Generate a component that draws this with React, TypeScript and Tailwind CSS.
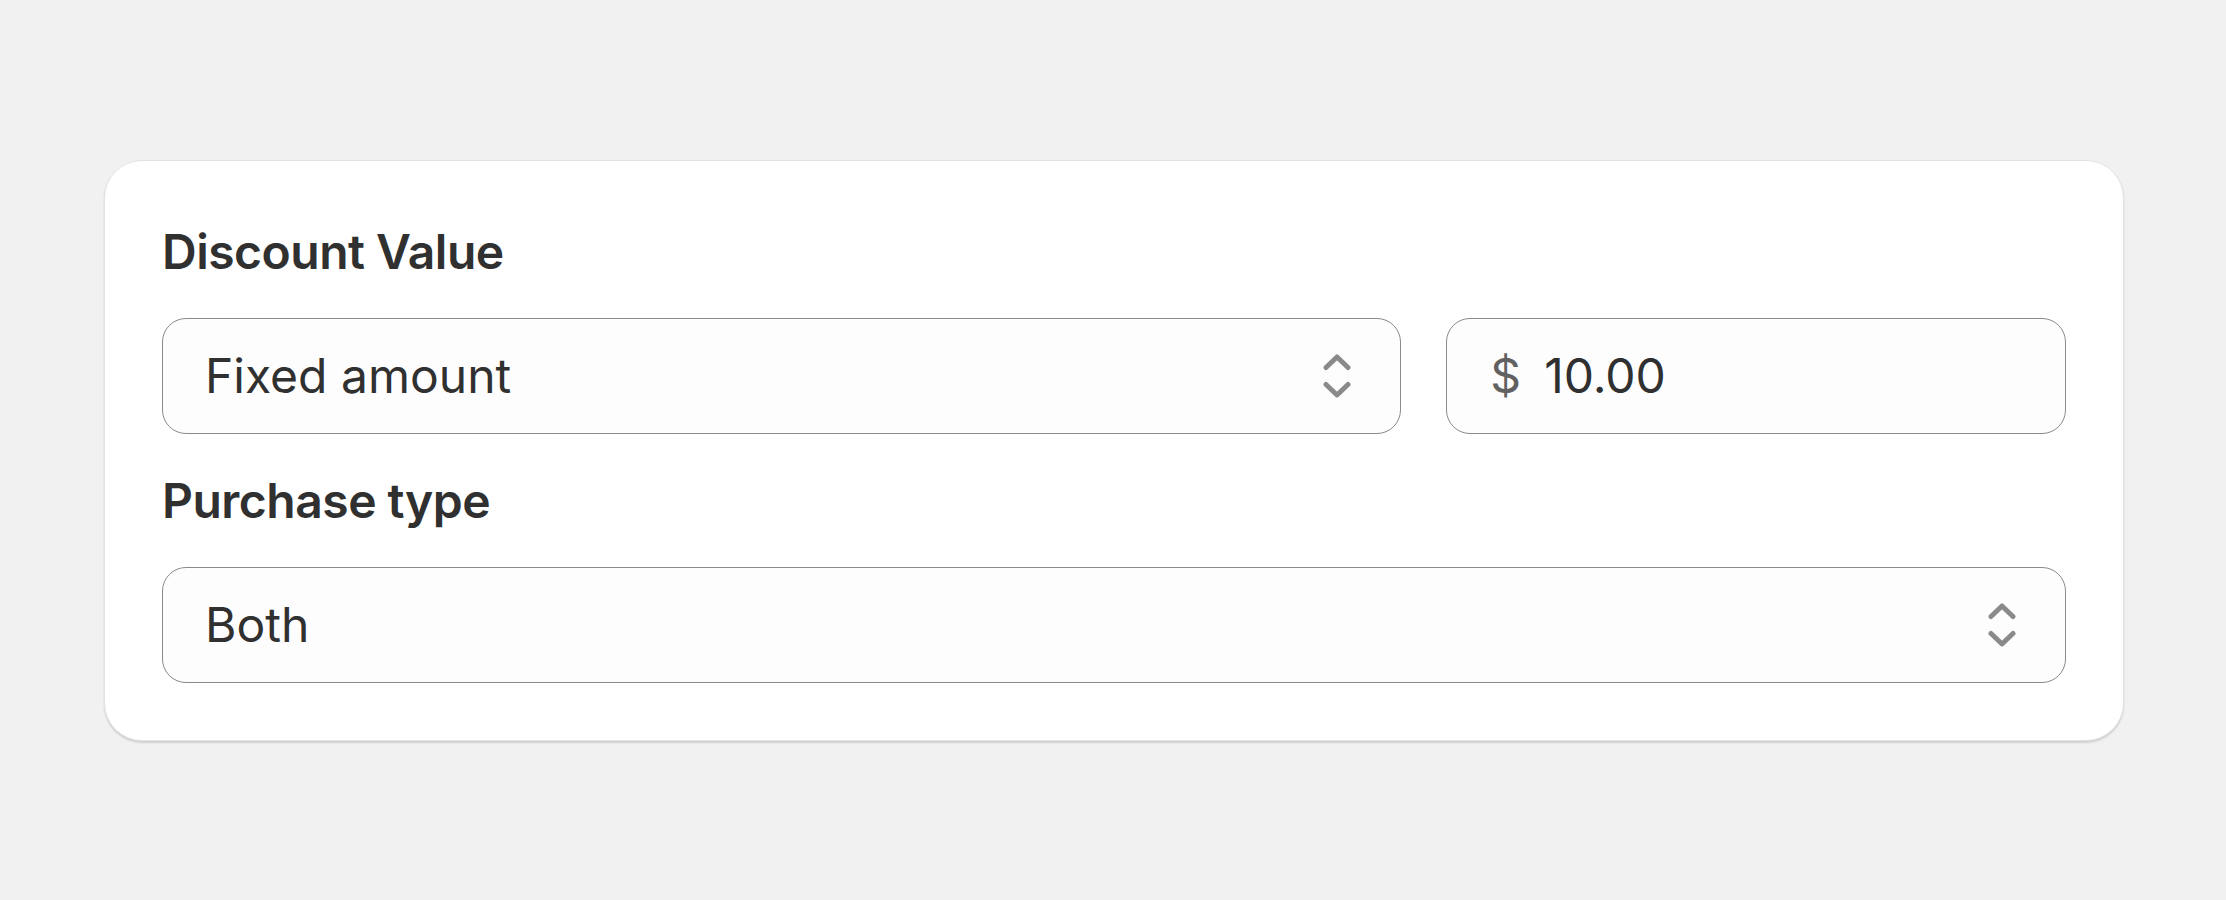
import React from 'react';

const SelectIcon = () => (
  <svg width="28" height="44" viewBox="0 0 28 44" fill="none" aria-hidden="true">
    <path
      d="M3 13.5L14 3L25 13.5M3 30.5L14 41L25 30.5"
      stroke="#8a8a8a"
      strokeWidth="5"
      strokeLinecap="round"
      strokeLinejoin="round"
    />
  </svg>
);

const Select = ({ value }: { value: string }) => (
  <div className="flex h-[116px] items-center justify-between rounded-[24px] border border-[#8a8a8a] bg-[#fdfdfd] pl-[42px] pr-[49px]">
    <span className="text-[48px] leading-none text-[#303030]">{value}</span>
    <SelectIcon />
  </div>
);

const App = () => {
  return (
    <div
      className="flex min-h-screen items-center justify-center bg-[#f1f1f1]"
      style={{ fontFamily: 'Inter, "Noto Sans", sans-serif' }}
    >
      <div className="ml-[2px] flex w-[2020px] flex-col gap-[33px] rounded-[38px] border border-[#e3e3e3] bg-white px-[57px] py-[57px] shadow-[0_2px_2px_rgba(0,0,0,0.14)]">
        <h2 className="text-[48px] font-semibold leading-[67px] tracking-[-0.5px] text-[#303030]">Discount Value</h2>
        <div className="grid grid-cols-[2fr_1fr] gap-[45px]">
          <Select value="Fixed amount" />
          <div className="flex h-[116px] items-center gap-[23px] rounded-[24px] border border-[#8a8a8a] bg-[#fdfdfd] pl-[43px] pr-[40px]">
            <span className="text-[48px] leading-none text-[#616161]">$</span>
            <span className="text-[48px] leading-none text-[#303030]">10.00</span>
          </div>
        </div>
        <h2 className="text-[48px] font-semibold leading-[67px] tracking-[-0.5px] text-[#303030]">Purchase type</h2>
        <Select value="Both" />
      </div>
    </div>
  );
};

export default App;
